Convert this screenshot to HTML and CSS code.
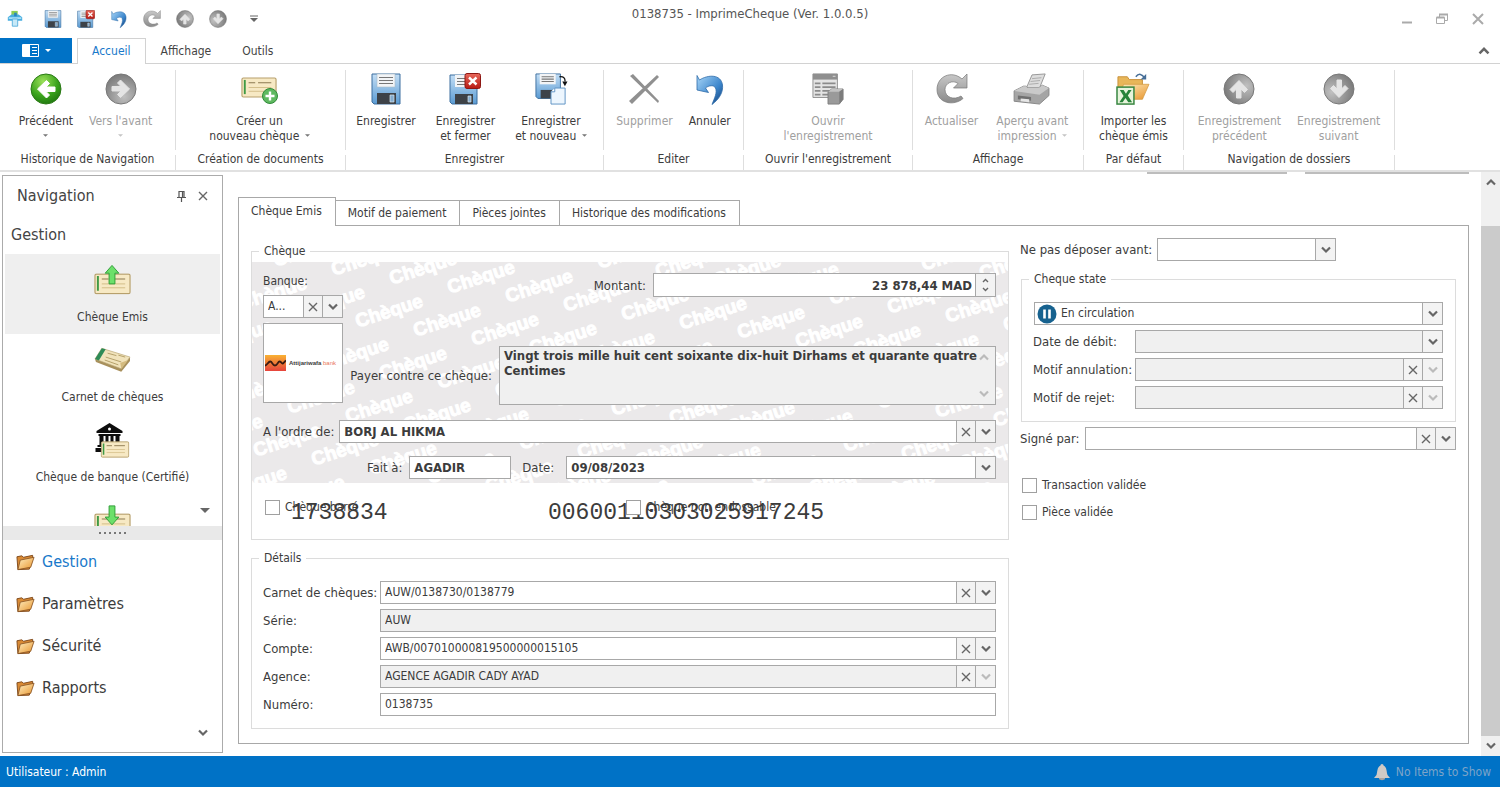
FILE: index.html
```html
<!DOCTYPE html>
<html lang="fr">
<head>
<meta charset="utf-8">
<title>0138735 - ImprimeCheque (Ver. 1.0.0.5)</title>
<link rel="stylesheet" href="styles.css">
</head>
<body>
<svg class="sprite" aria-hidden="true">
  <defs>
    <linearGradient id="gBlue" x1="0" y1="0" x2="0" y2="1"><stop offset="0" stop-color="#c3def5"/><stop offset="1" stop-color="#5a9bd3"/></linearGradient>
    <radialGradient id="gGreen" cx=".4" cy=".25" r=".8"><stop offset="0" stop-color="#9be05a"/><stop offset=".6" stop-color="#3aa31c"/><stop offset="1" stop-color="#1f7510"/></radialGradient>
    <radialGradient id="gGray" cx=".4" cy=".25" r=".8"><stop offset="0" stop-color="#c0c0c0"/><stop offset=".7" stop-color="#8d8d8d"/><stop offset="1" stop-color="#777"/></radialGradient>
    <linearGradient id="gRed" x1="0" y1="0" x2="0" y2="1"><stop offset="0" stop-color="#e8695c"/><stop offset="1" stop-color="#b71a14"/></linearGradient>
    <linearGradient id="gFolder" x1="0" y1="0" x2="1" y2="1"><stop offset="0" stop-color="#fff0c4"/><stop offset="1" stop-color="#e8942c"/></linearGradient>
    <linearGradient id="gSilver" x1="0" y1="0" x2="0" y2="1"><stop offset="0" stop-color="#c9c9c9"/><stop offset="1" stop-color="#8a8a8a"/></linearGradient>
    <linearGradient id="gUndo" x1="0" y1="0" x2="1" y2="1"><stop offset="0" stop-color="#a8d6f8"/><stop offset=".6" stop-color="#3c86cc"/><stop offset="1" stop-color="#123c74"/></linearGradient>
    <linearGradient id="gLogo" x1="0" y1="0" x2="0" y2="1"><stop offset="0" stop-color="#f9b233"/><stop offset="1" stop-color="#e6433c"/></linearGradient>
  </defs>
  <symbol id="floppy" viewBox="0 0 32 32">
    <path d="M2 1h28v30H4l-2-2z" fill="url(#gBlue)" stroke="#3d6f9f"/>
    <path d="M7 1h18v13H7z" fill="#f2f4f6" stroke="#a9bccb" stroke-width=".6"/>
    <path d="M9 4.500h14M9 7.500h14M9 10.500h14" stroke="#777" stroke-width="1.200"/>
    <path d="M7 20h19v11H7z" fill="#3d4248"/><path d="M20 22h4v7h-4z" fill="#84add0" stroke="#dbe6ee" stroke-width=".7"/>
  </symbol>
  <symbol id="floppy-close" viewBox="0 0 32 32">
    <path d="M1 2h27v29H3l-2-2z" fill="url(#gBlue)" stroke="#3d6f9f"/>
    <path d="M6 2h12v12H6z" fill="#f2f4f6"/><path d="M8 5.500h9M8 8.500h9M8 11.500h9" stroke="#777" stroke-width="1.200"/>
    <path d="M6 21h18v10H6z" fill="#3d4248"/><path d="M19 23h3v6h-3z" fill="#84add0" stroke="#dbe6ee" stroke-width=".7"/>
    <rect x="16" y=".500" width="15.500" height="15" rx="2" fill="url(#gRed)" stroke="#8d1713"/>
    <path d="M20 4.500l7.500 7M27.500 4.500l-7.500 7" stroke="#fff" stroke-width="2.400"/>
  </symbol>
  <symbol id="floppy-new" viewBox="0 0 34 34">
    <path d="M1 1h26v26H3l-2-2z" fill="url(#gBlue)" stroke="#3d6f9f"/>
    <path d="M5 1h17v11H5z" fill="#f2f4f6"/><path d="M7 4h13M7 6.500h13M7 9h13" stroke="#777" stroke-width="1.100"/>
    <path d="M6 18h14v9H6z" fill="#3d4248"/>
    <path d="M21 16h11v17H17V20z" fill="#edf6fe" stroke="#5b90c2"/><path d="M21 16v4h-4" fill="#fff" stroke="#5b90c2"/>
    <path d="M26 4c4-.5 6 1 6 5" fill="none" stroke="#111" stroke-width="1.400"/><path d="M29 9h5.500l-2.700 5z" fill="#111"/>
  </symbol>
  <symbol id="undo" viewBox="0 0 32 32">
    <path d="M3 2.500l2.500 4.500C14 1.500 27 1 28.500 12c.8 7-3 14-10.500 19.500 2.500-6.500 5.500-12 3.500-16.500-1.500-3.500-7-2.500-10 0l3 4.500L3 17z" fill="url(#gUndo)" stroke="#2d6ba8" stroke-width=".8"/>
  </symbol>
  <symbol id="redo" viewBox="0 0 32 32">
    <path d="M31 1v14H17.500l4.500-4.500c-5-4-13-.5-13 6 0 8 9 11 16 6.500l2 2.500C18 33.500 1 30.500 1 16.500 1 3 16-3 26 6z" fill="url(#gSilver)" stroke="#777" stroke-width=".7"/>
  </symbol>
  <symbol id="disc-green" viewBox="0 0 32 32"><circle cx="16" cy="16" r="15" fill="url(#gGreen)" stroke="#2b7a16"/>
    <path d="M16.500 7.500l3 3-3.500 3.500h9v4.500h-9l3.500 3.500-3 3L7.500 16z" fill="#fff" stroke="#fff" stroke-linejoin="round"/></symbol>
  <symbol id="disc-gray" viewBox="0 0 32 32"><circle cx="16" cy="16" r="15" fill="url(#gGray)" stroke="#787878"/>
    <path d="M16.500 7.500l3 3-3.500 3.500h9v4.500h-9l3.500 3.500-3 3L7.500 16z" fill="#e4e4e4" stroke="#e4e4e4" stroke-linejoin="round"/></symbol>
  <symbol id="cheque" viewBox="0 0 38 22">
    <rect x="1" y="1" width="36" height="20" rx="1.500" fill="#f7e9c4" stroke="#b7a06c" stroke-width="1.200"/>
    <path d="M4 3v15" stroke="#3f9a45" stroke-width="2"/><path d="M8 6h7M18 6h14" stroke="#8c7a50" stroke-width="1.200"/>
    <path d="M8 11h24M8 15h24" stroke="#d3bd88"/>
  </symbol>
  <symbol id="cheque-add" viewBox="0 0 38 30"><use href="#cheque" width="36" height="21" x="0" y="3"/>
    <circle cx="29" cy="22" r="7.500" fill="#5fb960" stroke="#2f8a39"/><path d="M29 17.500v9M24.500 22h9" stroke="#fff" stroke-width="2.400"/></symbol>
  <symbol id="cheque-up" viewBox="0 0 38 32"><use href="#cheque" width="38" height="22" y="9"/>
    <path d="M18.500 1l7 8h-4v11h-6V9h-4z" fill="#6ce06a" stroke="#2f9e38"/></symbol>
  <symbol id="cheque-down" viewBox="0 0 38 32"><use href="#cheque" width="38" height="22" y="9"/>
    <path d="M18.500 21l7-8h-4V1.500h-6V13h-4z" fill="#6ce06a" stroke="#2f9e38"/></symbol>
  <symbol id="booklet" viewBox="0 0 38 28">
    <path d="M1 13l1 3 26 10 9-11v-3z" fill="#a8905c"/><path d="M8 2l29 9-9 12L1 13z" fill="#f1e3bb" stroke="#b9a676" stroke-width=".7"/>
    <path d="M8 2l4 1-7 11.500L1 13z" fill="#2e8b57"/><path d="M14 7l9 2.500M25 9l7 2M12 11l16 5M11 14l14 5" stroke="#b49f69"/><path d="M28 23l-1-6 8-3z" fill="#d4bb7f"/>
  </symbol>
  <symbol id="bank" viewBox="0 0 34 36">
    <path d="M1 9L14 1l13 8v2H1zM3 12h22v2H3zM4 14h4v9H4zM10 14h3v9h-3zM15 14h3v9h-3zM20 14h4v9h-4zM2 23h24v2H2zM0 26h8v4H0z" fill="#0d0d0d"/><circle cx="14" cy="7" r="1.500" fill="#fff"/>
    <use href="#cheque" x="5" y="19" width="29" height="17"/>
  </symbol>
  <symbol id="cross" viewBox="0 0 32 32"><path d="M2 3l3-2 26 27-1 2zM1 28L29 2l2 2L4 31z" fill="#909090"/></symbol>
  <symbol id="record" viewBox="0 0 34 34">
    <path d="M1 1h26v25H1z" fill="#e4e4e4" stroke="#8e8e8e"/><path d="M1 1h26v6H1z" fill="#8f8f8f"/><path d="M22 3.500h3" stroke="#ddd"/>
    <path d="M3 11h6M11 11h14M3 15h6M11 15h14M3 19h6M11 19h10M3 23h6M11 23h6" stroke="#8b8b8b" stroke-width="1.800"/>
    <path d="M17 20l4-3h12v11l-4 5H17z" fill="#9a9a9a" stroke="#7e7e7e"/><path d="M17 20l4-3h12l-4 3z" fill="#c2c2c2"/><path d="M29 20l4-3v11l-4 5z" fill="#7c7c7c"/>
  </symbol>
  <symbol id="printer" viewBox="0 0 40 34">
    <path d="M14 16L20 2l14-1-6 15z" fill="#ddd" stroke="#939393"/><path d="M20 6l10-1M18.500 9l10-1M17 12l10-1" stroke="#aaa"/>
    <path d="M1 19l10-5h3l1 2h12l4-3 7 3v8l-10 9-27-3z" fill="#a5a5a5" stroke="#858585"/><path d="M1 19l10-5h3l1 2h12l4-3 7 3-10 7z" fill="#c9c9c9"/>
    <path d="M5 24l14 1.500v4L5 28z" fill="#707070"/><path d="M8 27l9 1v3l-9-1z" fill="#e6e6e6"/>
  </symbol>
  <symbol id="excel-open" viewBox="0 0 36 34">
    <path d="M2 4h10l2 3h14v20H2z" fill="#e8b659" stroke="#c78f37"/><path d="M8 12h27l-7 16H2z" fill="url(#gFolder)" stroke="#d29a42" stroke-width=".8"/>
    <path d="M21 4c3-4 7-3 9 1" fill="none" stroke="#466e97" stroke-width="1.600"/><path d="M32 1v6h-6z" fill="#466e97"/>
    <rect x="1" y="15" width="18" height="18" fill="#e7f4dc" stroke="#398742" stroke-width="1.600"/><path d="M4 18h4l2.500 4L13 18h3.500l-4 6 4.500 7h-4l-3-4.500L7 31H3.500L8 24.500z" fill="#27843a"/>
  </symbol>
  <symbol id="folder" viewBox="0 0 20 18">
    <path d="M1 3.500l5-1 2 1.500L17.500 2v3L14 16.500 2 17z" fill="#d98a34" stroke="#7e4a1c"/><path d="M4.500 7L19 4l-3.500 10.500L2 17z" fill="url(#gFolder)" stroke="#8a5322" stroke-width=".9"/>
  </symbol>
  <symbol id="chev" viewBox="0 0 10 8"><path d="M1 1.500l4 4 4-4" fill="none" stroke="currentColor" stroke-width="2.200"/></symbol>
  <symbol id="x" viewBox="0 0 10 10"><path d="M1 1l8 8M9 1L1 9" stroke="currentColor" stroke-width="1.400"/></symbol>
  <symbol id="tri" viewBox="0 0 10 5"><path d="M0 0h10L5 5z" fill="currentColor"/></symbol>
  <symbol id="appicon" viewBox="0 0 18 20">
    <path d="M5 1h7v6H5z" fill="#8ccf50"/><path d="M1 8l4-3h8l4 3v4H1z" fill="#48aee0"/><path d="M2 8h14v2H2z" fill="#a9def5"/><path d="M6 10h6v8H6z" fill="#c7e9f8" stroke="#56aedb"/><path d="M8 3h3v4H8z" fill="#2b86bd"/>
  </symbol>
</svg>

<div class="app">
  <header class="titlebar">
    <div class="quick">
      <svg class="i18 appicon"><use href="#appicon"/></svg>
      <button aria-label="Enregistrer"><svg class="i18"><use href="#floppy"/></svg></button>
      <button aria-label="Enregistrer et fermer"><svg class="i18"><use href="#floppy-close"/></svg></button>
      <button aria-label="Annuler"><svg class="i18"><use href="#undo"/></svg></button>
      <button aria-label="Actualiser"><svg class="i18"><use href="#redo"/></svg></button>
      <button aria-label="Enregistrement précédent"><svg class="i18 to-up"><use href="#disc-gray"/></svg></button>
      <button aria-label="Enregistrement suivant"><svg class="i18 to-down"><use href="#disc-gray"/></svg></button>
      <button class="more" aria-label="Personnaliser"><svg width="8" height="8" viewBox="0 0 8 8"><path d="M0 1h8" stroke="#666"/><path d="M0 3h8L4 7z" fill="#666"/></svg></button>
    </div>
    <h1>0138735 - ImprimeCheque (Ver. 1.0.0.5)</h1>
    <div class="winbtns">
      <button aria-label="Réduire"><svg width="12" height="12"><path d="M1 9.500h10" stroke="#aaa" stroke-width="2"/></svg></button>
      <button aria-label="Restaurer"><svg width="13" height="12" fill="none" stroke="#aaa"><path d="M3.500 4V1.500h8v6H9"/><path d="M3 1.500h9M.500 4.500h8" stroke-width="2"/><path d="M.500 4.500h8v6h-8z"/></svg></button>
      <button aria-label="Fermer"><svg width="12" height="12"><path d="M1 1l10 10M11 1L1 11" stroke="#aaa" stroke-width="2"/></svg></button>
    </div>
  </header>

  <nav class="ribbon-tabs">
    <button class="file" aria-label="Fichier"><svg width="17" height="13" viewBox="0 0 17 13"><path d="M.500.500h16v12H.500z" fill="none" stroke="#fff"/><path d="M1 1h7v11H1z" fill="#fff"/><path d="M10 3.500h5M10 6.500h5M10 9.500h5" stroke="#fff"/></svg><svg width="6" height="3"><use href="#tri"/></svg></button>
    <button class="tab on">Accueil</button><button class="tab">Affichage</button><button class="tab">Outils</button>
    <button class="fold" aria-label="Réduire le ruban"><svg class="flip" width="12" height="9"><use href="#chev"/></svg></button>
  </nav>

  <section class="ribbon">
    <div class="group g1"><div class="cmds">
      <button><svg class="i32"><use href="#disc-green"/></svg><span>Précédent</span><svg class="tri"><use href="#tri"/></svg></button>
      <button disabled><svg class="i32 to-right"><use href="#disc-gray"/></svg><span>Vers l'avant</span><svg class="tri"><use href="#tri"/></svg></button></div>
      <p>Historique de Navigation</p></div>
    <div class="group g2"><div class="cmds">
      <button><svg class="i32 wide"><use href="#cheque-add"/></svg><span>Créer un<br>nouveau chèque <svg class="tri in"><use href="#tri"/></svg></span></button></div>
      <p>Création de documents</p></div>
    <div class="group g3"><div class="cmds">
      <button><svg class="i32"><use href="#floppy"/></svg><span>Enregistrer</span></button>
      <button><svg class="i32"><use href="#floppy-close"/></svg><span>Enregistrer<br>et fermer</span></button>
      <button><svg class="i32 wide"><use href="#floppy-new"/></svg><span>Enregistrer<br>et nouveau <svg class="tri in"><use href="#tri"/></svg></span></button></div>
      <p>Enregistrer</p></div>
    <div class="group g4"><div class="cmds">
      <button disabled><svg class="i32"><use href="#cross"/></svg><span>Supprimer</span></button>
      <button><svg class="i32"><use href="#undo"/></svg><span>Annuler</span></button></div>
      <p>Editer</p></div>
    <div class="group g5"><div class="cmds">
      <button disabled><svg class="i32 wide"><use href="#record"/></svg><span>Ouvrir<br>l'enregistrement</span></button></div>
      <p>Ouvrir l'enregistrement</p></div>
    <div class="group g6"><div class="cmds">
      <button disabled><svg class="i32"><use href="#redo"/></svg><span>Actualiser</span></button>
      <button disabled><svg class="i32 wide"><use href="#printer"/></svg><span>Aperçu avant<br>impression <svg class="tri in"><use href="#tri"/></svg></span></button></div>
      <p>Affichage</p></div>
    <div class="group g7"><div class="cmds">
      <button><svg class="i32 wide"><use href="#excel-open"/></svg><span>Importer les<br>chèque émis</span></button></div>
      <p>Par défaut</p></div>
    <div class="group g8"><div class="cmds">
      <button disabled><svg class="i32 to-up"><use href="#disc-gray"/></svg><span>Enregistrement<br>précédent</span></button>
      <button disabled><svg class="i32 to-down"><use href="#disc-gray"/></svg><span>Enregistrement<br>suivant</span></button></div>
      <p>Navigation de dossiers</p></div>
  </section>

  <div class="body">
    <aside class="nav">
      <div class="nav-title"><h2>Navigation</h2>
        <button aria-label="Épingler"><svg width="9" height="11" viewBox="0 0 9 11"><path d="M2 .500h5v6H2zM0 6.500h9M4.500 7v4M5.500 1v5" fill="none" stroke="#555" stroke-width="1.200"/></svg></button>
        <button aria-label="Fermer"><svg width="10" height="10"><use href="#x"/></svg></button></div>
      <h2 class="nav-head">Gestion</h2>
      <div class="nav-items">
        <a href="#" class="on"><svg><use href="#cheque-up"/></svg>Chèque Emis</a>
        <a href="#"><svg><use href="#booklet"/></svg>Carnet de chèques</a>
        <a href="#"><svg><use href="#bank"/></svg>Chèque de banque (Certifié)</a>
        <a href="#" aria-label="Chèque reçu"><svg><use href="#cheque-down"/></svg></a>
        <button class="nav-more" aria-label="Suite"><svg width="10" height="5"><use href="#tri"/></svg></button>
      </div>
      <div class="splitter"><i></i><i></i><i></i><i></i><i></i><i></i></div>
      <div class="nav-groups">
        <a href="#" class="on"><svg><use href="#folder"/></svg>Gestion</a>
        <a href="#"><svg><use href="#folder"/></svg>Paramètres</a>
        <a href="#"><svg><use href="#folder"/></svg>Sécurité</a>
        <a href="#"><svg><use href="#folder"/></svg>Rapports</a>
      </div>
      <button class="nav-cfg" aria-label="Configurer"><svg width="10" height="8"><use href="#chev"/></svg></button>
    </aside>

    <main class="main">
      <div class="cut"><i></i><i class="long"></i></div>
      <div class="tabs" role="tablist">
        <button role="tab" class="on">Chèque Emis</button><button role="tab">Motif de paiement</button><button role="tab">Pièces jointes</button><button role="tab">Historique des modifications</button>
      </div>
      <form class="panel">
        <div class="left">
          <fieldset class="cheque"><legend>Chèque</legend>
            <div class="paper">
              <svg class="mark" id="mark" aria-hidden="true"></svg>
              <div class="top">
                <div class="bank">
                  <label for="banque">Banque:</label>
                  <div class="combo"><select id="banque"><option>A...</option></select><button type="button" class="c2" aria-label="Effacer"><svg><use href="#x"/></svg></button><span class="c3"><svg><use href="#chev"/></svg></span></div>
                  <div class="logo"><svg width="21" height="16" viewBox="0 0 20 16" preserveAspectRatio="none"><path d="M0 0h20v16H0z" fill="url(#gLogo)"/><path d="M0 10.500c2 0 3-4 5-4s2 4 4.500 4 2.500-4 4.500-4 2 4 4 1l2-2" fill="none" stroke="#3b1c12" stroke-width="1.800"/></svg><span>Attijariwafa <b>bank</b></span></div>
                </div>
                <div class="amounts">
                  <div class="row"><label for="montant">Montant:</label>
                    <div class="combo amount"><input id="montant" class="bold num" value="23 878,44 MAD"><span class="c3 spin"><svg class="flip"><use href="#chev"/></svg><svg><use href="#chev"/></svg></span></div></div>
                  <div class="row words"><label for="payer">Payer contre ce chèque:</label>
                    <div class="area"><textarea id="payer" class="bold" readonly>Vingt trois mille huit cent soixante dix-huit Dirhams et quarante quatre Centimes</textarea><span><svg class="flip"><use href="#chev"/></svg><svg><use href="#chev"/></svg></span></div></div>
                </div>
              </div>
              <div class="row order"><label for="ordre">A l'ordre de:</label>
                <div class="combo"><select id="ordre" class="bold"><option>BORJ AL HIKMA</option></select><button type="button" class="c2" aria-label="Effacer"><svg><use href="#x"/></svg></button><span class="c3"><svg><use href="#chev"/></svg></span></div></div>
              <div class="row made"><label for="fait">Fait à:</label><div class="combo place"><input id="fait" class="bold" value="AGADIR"></div>
                <label for="date">Date:</label><div class="combo"><input id="date" class="bold" value="09/08/2023"><button type="button" class="c3" aria-label="Choisir la date"><svg><use href="#chev"/></svg></button></div></div>
            </div>
            <div class="foot">
              <span class="micr m1">1738834</span><span class="micr m2">00600110303025917245</span>
              <label class="check"><input type="checkbox">Chèque barré</label>
              <label class="check"><input type="checkbox">Chèque non endossable</label>
            </div>
          </fieldset>
          <fieldset class="details"><legend>Détails</legend>
            <label for="carnet">Carnet de chèques:</label>
            <div class="combo"><select id="carnet"><option>AUW/0138730/0138779</option></select><button type="button" class="c2" aria-label="Effacer"><svg><use href="#x"/></svg></button><span class="c3"><svg><use href="#chev"/></svg></span></div>
            <label for="serie">Série:</label><div class="combo off"><input id="serie" value="AUW" readonly></div>
            <label for="compte">Compte:</label>
            <div class="combo"><select id="compte"><option>AWB/007010000819500000015105</option></select><button type="button" class="c2" aria-label="Effacer"><svg><use href="#x"/></svg></button><span class="c3"><svg><use href="#chev"/></svg></span></div>
            <label for="agence">Agence:</label>
            <div class="combo off"><select id="agence"><option>AGENCE AGADIR CADY AYAD</option></select><button type="button" class="c2" aria-label="Effacer"><svg><use href="#x"/></svg></button><span class="c3 dim"><svg><use href="#chev"/></svg></span></div>
            <label for="numero">Numéro:</label><div class="combo"><input id="numero" value="0138735"></div>
          </fieldset>
        </div>

        <div class="side">
          <div class="row before"><label for="avant">Ne pas déposer avant:</label><div class="combo"><input id="avant"><button type="button" class="c3" aria-label="Choisir la date"><svg><use href="#chev"/></svg></button></div></div>
          <fieldset class="state"><legend>Cheque state</legend>
            <div class="combo status"><select aria-label="Cheque state"><option>En circulation</option></select>
              <svg class="pause" viewBox="0 0 20 20"><circle cx="10" cy="10" r="9.500" fill="#17628f"/><path d="M7.500 5.500v9M12.500 5.500v9" stroke="#fff" stroke-width="2.600"/></svg>
              <span class="c3"><svg><use href="#chev"/></svg></span></div>
            <label for="debit">Date de débit:</label><div class="combo off"><input id="debit" readonly><button type="button" class="c3" aria-label="Choisir la date"><svg><use href="#chev"/></svg></button></div>
            <label for="annul">Motif annulation:</label><div class="combo off"><select id="annul"><option></option></select><button type="button" class="c2" aria-label="Effacer"><svg><use href="#x"/></svg></button><span class="c3 dim"><svg><use href="#chev"/></svg></span></div>
            <label for="rejet">Motif de rejet:</label><div class="combo off"><select id="rejet"><option></option></select><button type="button" class="c2" aria-label="Effacer"><svg><use href="#x"/></svg></button><span class="c3 dim"><svg><use href="#chev"/></svg></span></div>
          </fieldset>
          <div class="row signed"><label for="signe">Signé par:</label><div class="combo"><select id="signe"><option></option></select><button type="button" class="c2" aria-label="Effacer"><svg><use href="#x"/></svg></button><span class="c3"><svg><use href="#chev"/></svg></span></div></div>
          <label class="check first"><input type="checkbox">Transaction validée</label>
          <label class="check"><input type="checkbox">Pièce validée</label>
        </div>
      </form>
    </main>
    <div class="scroll"><button aria-label="Monter"><svg class="flip"><use href="#chev"/></svg></button><div class="thumb"></div><button aria-label="Descendre"><svg><use href="#chev"/></svg></button></div>
  </div>

  <footer class="statusbar"><span>Utilisateur : Admin</span>
    <span class="bell"><svg width="18" height="18" viewBox="0 0 18 18"><path d="M9 1c1 0 1.500.8 1.500 1.500C14 4 13.500 9 14.500 12l2.500 3H1l2.500-3c1-3 .5-8 4-9.500C7.500 1.800 8 1 9 1z" fill="#cfcac6"/><path d="M6 15h6v1c-1 1.500-5 1.500-6 0z" fill="#a9a29e"/></svg>No Items to Show</span></footer>
</div>
<script src="script.js"></script>
</body>
</html>
```

FILE: script.js
```js
// Fills the cheque paper with its diagonal lattice of watermark words.
const mark = document.getElementById("mark");
const across = [58, 9];
const down = [-34, 43];
for (let m = -8; m < 9; m++) {
  for (let n = -8; n < 26; n++) {
    const x = 139 + n * across[0] + m * down[0];
    const y = 55 + n * across[1] + m * down[1];
    if (x < -40 || x > mark.clientWidth + 40 || y < -12 || y > 245) continue;
    const t = document.createElementNS("http://www.w3.org/2000/svg", "text");
    t.setAttribute("transform", `translate(${x} ${y}) rotate(-18)`);
    t.textContent = "Chèque";
    mark.appendChild(t);
  }
}
```

FILE: styles.css
```css
* { box-sizing: border-box; }
body { margin: 0; font: 12px/15px "DejaVu Sans Condensed", "DejaVu Sans", sans-serif; color: #3c3c3c; background: #fff; }
button, input, select, textarea { font: inherit; color: inherit; margin: 0; }
button { border: 0; padding: 0; background: none; color: #666; display: flex; align-items: center; justify-content: center; }
h1, h2, p { margin: 0; font-weight: normal; }
a { color: inherit; text-decoration: none; }
svg { display: block; flex: none; }
.sprite { position: absolute; width: 0; height: 0; }
.flip { transform: scaleY(-1); }
.to-up { transform: rotate(90deg); }
.to-down { transform: rotate(-90deg); }
.to-right { transform: rotate(180deg); }
.i18 { width: 18px; height: 18px; }
.i32 { width: 32px; height: 32px; }
.i32.wide { width: 38px; }

.app { display: flex; flex-direction: column; height: 100vh; overflow: hidden; }

.titlebar { display: grid; grid-template-columns: 1fr auto 1fr; height: 38px; }
.titlebar h1 { font-size: 13px; line-height: 28px; color: #555; }
.quick { display: flex; align-items: center; gap: 15px; padding-left: 6px; }
.appicon { margin-right: 5px; }
.quick .more { margin-left: 8px; }
.winbtns { display: flex; justify-content: flex-end; align-items: center; gap: 23px; padding-right: 16px; }

.ribbon-tabs { display: flex; height: 26px; border-bottom: 1px solid #d2d2d2; }
.file { width: 72px; background: #0072c6; color: #fff; gap: 6px; margin-right: 5px; }
.tab { padding: 0 15px 0 14px; color: #444; border: 1px solid transparent; border-bottom: 0; }
.tab.on { padding: 0 14px; height: 26px; background: #fff; color: #1979ca; border-color: #d2d2d2; }
.fold { margin-left: auto; padding-right: 10px; }

.ribbon { display: flex; height: 108px; border-bottom: 2px solid #e1e1e1; }
.group { display: grid; grid-template-rows: 80px 15px; row-gap: 5px; padding-top: 6px; }
.group > * { border-right: 1px solid #dedede; }
.group p { text-align: center; line-height: 8px; white-space: nowrap; }
.cmds { display: flex; justify-content: center; }
.cmds button { flex-direction: column; justify-content: flex-start; padding: 3px 8px 0; color: #3c3c3c; white-space: nowrap; }
.cmds button span { margin-top: 9px; text-align: center; }
.cmds button:disabled { color: #a0a0a0; }
.tri { width: 5px; height: 3px; margin-top: 5px; color: #777; }
.tri.in { display: inline-block; margin: 0 0 3px 2px; }
.cmds button:disabled .tri { color: #c4c4c4; }
.g1 { width: 176px; } .g2 { width: 170px; } .g3 { width: 258px; } .g4 { width: 140px; }
.g5 { width: 169px; } .g6 { width: 171px; } .g7 { width: 100px; } .g8 { width: 211px; }
.g1 .cmds { padding-right: 4px; }
.g2 .cmds { padding-right: 2px; }
.g3 .cmds { gap: 4px; padding-right: 6px; }
.g6 .cmds { gap: 2px; padding-right: 3px; }

.body { display: flex; flex: 1; min-height: 0; }

.nav { display: flex; flex-direction: column; width: 221px; margin: 3px 0 3px 2px; border: 1px solid #ababab; }
.nav h2 { font-size: 16px; line-height: 20px; color: #444; }
.nav-title { display: flex; align-items: center; gap: 12px; padding: 10px 14px 9px; }
.nav-title h2 { margin-right: auto; }
.nav .nav-head { padding: 10px 8px 9px; }
.nav-items { position: relative; flex: none; height: 272px; overflow: hidden; padding: 0 2px; }
.nav-items a { display: flex; flex-direction: column; align-items: center; height: 80px; padding-top: 8px; }
.nav-items a svg { width: 37px; height: 36px; margin-bottom: 12px; }
.nav-items a.on { background: #efefef; }
.nav-more { position: absolute; right: 12px; bottom: 13px; }
.splitter { display: flex; align-items: center; justify-content: center; gap: 3px; height: 14px; background: #e9e9e9; }
.splitter i { width: 2px; height: 2px; background: #777; }
.nav-groups { padding-top: 1px; }
.nav-groups a { display: flex; align-items: center; gap: 7px; height: 42px; padding-left: 13px; font-size: 16px; line-height: 20px; }
.nav-groups a svg { width: 19px; height: 18px; }
.nav-groups .on { color: #1979ca; }
.nav-cfg { margin: auto 14px 15px auto; }

.main { flex: 1; min-width: 0; display: flex; flex-direction: column; padding: 0 12px 12px 15px; }
.cut { display: flex; justify-content: flex-end; gap: 18px; }
.cut i { width: 140px; height: 2px; background: #bdbdbd; }
.cut .long { width: 164px; }
.tabs { display: flex; align-items: flex-end; height: 51px; }
.tabs button { height: 25px; margin-left: -1px; padding: 0 13px 0 12px; border: 1px solid #a8a8a8; border-bottom: 0; color: #3c3c3c; white-space: nowrap; }
.tabs .on { position: relative; height: 29px; margin: 0 0 -1px; padding-bottom: 2px; background: #fff; }
.panel { display: flex; flex: 1; gap: 11px; border: 1px solid #a8a8a8; padding: 12px; }

fieldset { min-width: 0; margin: 0; border: 1px solid #dcdcdc; padding: 0; }
legend { margin-left: 7px; padding: 0 5px; line-height: 16px; }
.left { flex: 758; min-width: 0; padding-top: 5px; }
.side { flex: 436; min-width: 0; }
.row { display: flex; align-items: center; gap: 7px; }
.row label, .details label, .state label { font-size: 13px; white-space: nowrap; }

.combo { display: grid; grid-template-columns: minmax(0, 1fr) 19px 20px; flex: 1; height: 23px; border: 1px solid #a8a8a8; background: #fff; }
.combo > input, .combo > select { grid-area: 1 / 1 / 2 / 4; width: 100%; min-width: 0; appearance: none; border: 0; background: none; padding: 0 4px; outline: 0; }
.combo .c2, .combo .c3 { display: flex; align-items: center; justify-content: center; border-left: 1px solid #a8a8a8; background: #f3f3f3; color: #666; }
.combo .c2 { grid-area: 1 / 2; }
.combo .c3 { grid-area: 1 / 3; }
.combo svg { width: 10px; height: 8px; }
.combo .c2 svg { height: 10px; }
.combo .dim { color: #bbb; }
.off { background: #f0f0f0; }
.combo .spin { flex-direction: column; gap: 4px; }
.combo .spin svg { width: 7px; height: 5px; }
.bold { font-size: 13px; font-weight: bold; }
.combo .num { text-align: right; padding-right: 23px; }

.paper { position: relative; margin-top: 3px; padding: 11px 12px 4px 11px; background: #ebe9ea; }
.mark { position: absolute; top: 0; left: 0; width: 100%; height: 100%; }
.mark text { font: bold 19px "Liberation Sans", sans-serif; fill: #fff; stroke: #fff; text-anchor: middle; }
.paper > div { position: relative; }
.top { display: flex; }
.bank { width: 80px; }
.bank label { display: block; margin: 1px 0 6px; }
.bank .combo { margin-bottom: 5px; }
.logo { display: flex; align-items: center; gap: 3px; height: 80px; padding: 0 1px; border: 1px solid #a8a8a8; background: #fff; font: bold 6px/8px "Liberation Sans", sans-serif; white-space: nowrap; overflow: hidden; }
.logo b { font-weight: normal; color: #e8765a; }
.amounts { flex: 1; }
.amounts .row { justify-content: flex-end; }
.combo.amount { flex: 0 1 343px; height: 24px; }
.words { margin-top: 49px; }
.area { display: grid; grid-template-columns: minmax(0, 1fr) 22px; flex: 0 0 497px; height: 59px; border: 1px solid #a8a8a8; background: #f0f0f0; }
.area textarea { grid-area: 1 / 1 / 2 / 3; resize: none; overflow: hidden; border: 0; background: none; padding: 1px 16px 0 4px; outline: 0; }
.area span { grid-area: 1 / 2; display: flex; flex-direction: column; justify-content: space-between; align-items: center; padding: 6px 0; color: #bbb; }
.area svg { width: 10px; height: 8px; }
.order { gap: 5px; margin-top: 15px; }
.made { margin-top: 13px; padding-left: 104px; }
.place { flex: 0 0 102px; margin-right: 4px; }
.made .combo + label { margin-right: 5px; }

.foot { position: relative; display: grid; grid-template-columns: 361px 1fr; align-items: start; height: 56px; padding: 17px 0 0 13px; }
.check { display: flex; align-items: center; gap: 5px; }
.check input { appearance: none; flex: none; width: 15px; height: 15px; margin: 0; border: 1px solid #a0a0a0; background: #fff; }
.foot .check { position: relative; }
.micr { position: absolute; top: 17px; font: 23px/26px "Liberation Mono", monospace; }
.m1 { left: 39px; } .m2 { left: 296px; }

.details { display: grid; grid-template-columns: 117px 1fr; row-gap: 5px; align-items: center; margin-top: 10px; padding: 15px 12px 12px 11px; }
.details legend, .state legend { margin-left: -4px; }
.before { gap: 5px; margin-bottom: 10px; }
.before .combo { flex: 0 1 179px; }
.state { display: grid; grid-template-columns: 102px 1fr; row-gap: 5px; align-items: center; margin-left: 1px; padding: 15px 12px 12px 11px; }
.status { grid-column: 1 / 3; margin-left: 1px; }
.combo.status select { padding-left: 26px; }
.combo.status .pause { grid-area: 1 / 1; width: 20px; height: 20px; margin-left: 2px; align-self: center; pointer-events: none; }
.signed { gap: 5px; margin: 5px 0 0; }
.side .check { margin: 12px 0 0 2px; }
.side .check.first { margin-top: 28px; }

.scroll { display: flex; flex-direction: column; width: 19px; background: #f0f0f0; }
.scroll button { height: 20px; }
.scroll svg { width: 10px; height: 8px; }
.thumb { flex: 1; margin-top: 34px; background: #cbcbcb; }

.statusbar { display: flex; justify-content: space-between; align-items: center; height: 31px; padding: 1px 9px 0 6px; background: #0072c6; color: #fff; }
.bell { display: flex; align-items: center; gap: 5px; color: #7da4c8; }
```
